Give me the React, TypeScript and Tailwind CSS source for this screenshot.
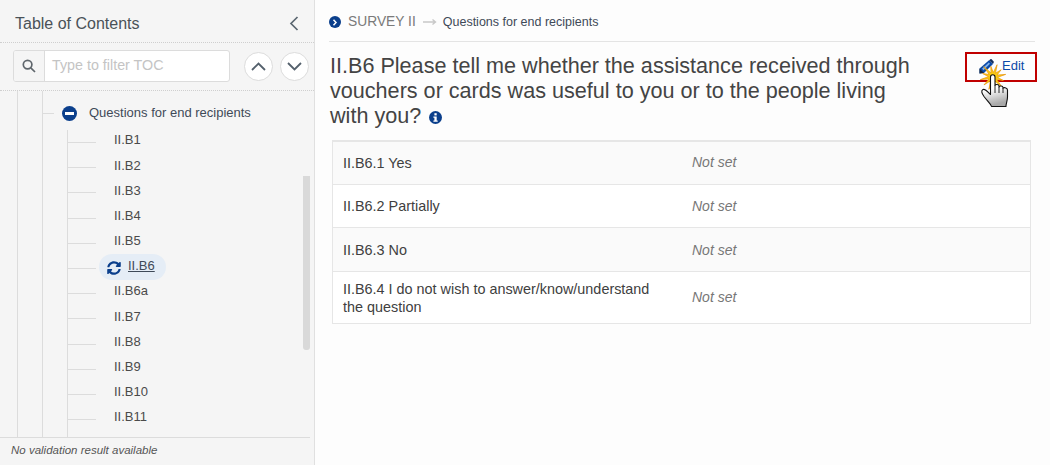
const font = "font-['Liberation_Sans',Arial,sans-serif]";

const treeItems = ["II.B1", "II.B2", "II.B3", "II.B4", "II.B5", "II.B6", "II.B6a", "II.B7", "II.B8", "II.B9", "II.B10", "II.B11"];

const answers = [
  { label: "II.B6.1 Yes", rowClass: "h-[43px] bg-[#fafafa] pb-[1px]" },
  { label: "II.B6.2 Partially", rowClass: "h-[43px] bg-white" },
  { label: "II.B6.3 No", rowClass: "h-[44px] bg-[#fafafa] pt-[1px]" },
  { label: "II.B6.4 I do not wish to answer/know/understand the question", rowClass: "h-[51px] bg-white" },
];

const starRadii = [13, 4.5, 11, 4.5, 14, 4.5, 11, 4.5, 13, 4.5, 12, 4.5, 13, 4.5, 11, 4.5, 14, 4.5, 11, 4.5, 13, 4.5, 11, 4.5];
const starPoints = starRadii
  .map((r, i) => {
    const a = (i / starRadii.length) * Math.PI * 2 - 0.2;
    return `${(13 + r * Math.cos(a)).toFixed(1)},${(13 + r * Math.sin(a)).toFixed(1)}`;
  })
  .join(" ");

function SyncIcon() {
  return (
    <svg width="14" height="14" viewBox="0 0 512 512" fill="#0b3f8c" className="mt-[2px] -ml-[1px]">
      <path d="M370.72 133.28C339.458 104.008 298.888 87.962 255.848 88c-77.458.068-144.328 53.178-162.791 126.85-1.344 5.363-6.122 9.15-11.651 9.15H24.103c-7.498 0-13.194-6.807-11.807-14.176C33.933 94.924 134.813 8 256 8c66.448 0 126.791 26.136 171.315 68.685L463.03 40.97C478.149 25.851 504 36.559 504 57.941V192c0 13.255-10.745 24-24 24H345.941c-21.382 0-32.09-25.851-16.971-40.971l41.75-41.749zM32 296h134.059c21.382 0 32.09 25.851 16.971 40.971l-41.75 41.75c31.262 29.273 71.835 45.319 114.876 45.28 77.418-.07 144.315-53.144 162.787-126.849 1.344-5.363 6.122-9.15 11.651-9.15h57.304c7.498 0 13.194 6.807 11.807 14.176C478.067 417.076 377.187 504 256 504c-66.448 0-126.791-26.136-171.315-68.685L48.97 471.03C33.851 486.149 8 475.441 8 454.059V320c0-13.255 10.745-24 24-24z" />
    </svg>
  );
}

function ChevronButton({ up }: { up?: boolean }) {
  return (
    <button className="flex h-[29px] w-[29px] items-center justify-center rounded-full border border-[#dcdcdc] bg-white">
      <svg width="15" height="9" viewBox="0 0 15 9" fill="none" stroke="#54606c" strokeWidth="1.8">
        <path d={up ? "M1 8L7.5 1.5L14 8" : "M1 1L7.5 7.5L14 1"} />
      </svg>
    </button>
  );
}

function EditCursor() {
  return (
    <svg className="absolute left-[13px] top-[10px]" width="30" height="44" viewBox="0 0 30 44">
      <defs>
        <linearGradient id="hand" x1="0" y1="0" x2="0.2" y2="1">
          <stop offset="0.5" stopColor="#ffffff" />
          <stop offset="1" stopColor="#a8a8a8" />
        </linearGradient>
      </defs>
      <polygon points={starPoints} fill="#fbcb12" stroke="#e8930a" strokeWidth="0.7" />
      <path
        d="M10.5 13C10.5 10 15 10 15 13V21.5C15 20 19 20 19 22V23C19 21.5 23 21.5 23 23.5V24.5C23 23 27.5 23.5 27.5 26V33C27.5 37 26 39 26 42.5H11.5C11 40 7 36.5 4 32.5C1.5 29 1 26.5 3 25.5C5 24.5 8 28 10.5 30.5Z"
        fill="url(#hand)"
        stroke="#111111"
        strokeWidth="1.1"
        strokeLinejoin="round"
      />
      <path d="M15 21.5V29M19 23V29M23 24.5V29" stroke="#111111" strokeWidth="0.9" />
    </svg>
  );
}

function PencilIcon() {
  return (
    <svg width="15" height="15" viewBox="0 0 15 15">
      <path d="M0.5 9.5L10 1.2L14 5L5 14L0.5 14.5Z" fill="#0b4aa8" />
      <path d="M10 1.2L11.2 0.4C11.7 0 12.3 0 12.8 0.5L14.5 2.2C15 2.7 15 3.3 14.6 3.8L14 5Z" fill="#16305f" />
      <path d="M3 9.7L9.8 3.5L11 4.7L4.5 11.2Z" fill="#7fb0ea" />
      <path d="M0.5 9.5L5 14L0.5 14.5Z" fill="#16243c" />
    </svg>
  );
}

export default function App() {
  return (
    <div className={`${font} flex h-[465px] w-[1050px] overflow-hidden bg-[#fdfdfd] text-[14px] text-[#404040]`}>
      <aside className="flex w-[315px] shrink-0 flex-col border-r border-[#e0e0e0] bg-[#f5f5f5]">
        <div className="flex h-[43px] shrink-0 items-center justify-between border-b border-dotted border-[#cfcfcf] pl-[15px] pr-[15px] pt-[5px]">
          <span className="text-[16px] text-[#4a5258]">Table of Contents</span>
          <svg width="10" height="15" viewBox="0 0 10 15" fill="none" stroke="#5a6670" strokeWidth="1.7">
            <path d="M8.5 1L2 7.5L8.5 14" />
          </svg>
        </div>

        <div className="flex h-[48px] shrink-0 items-center gap-[14px] border-b border-dotted border-[#cfcfcf] pl-[13px]">
          <div className="-mt-[1px] flex h-[32px] w-[217px] overflow-hidden rounded-[3px] border border-[#dcdcdc] bg-white">
            <div className="flex w-[31px] shrink-0 items-center justify-center border-r border-[#dcdcdc] bg-[#f5f5f5]">
              <svg width="14" height="14" viewBox="0 0 14 14" fill="none" stroke="#5f666c" strokeWidth="1.7">
                <circle cx="5.6" cy="5.6" r="4.3" />
                <path d="M8.8 8.8L13 13" />
              </svg>
            </div>
            <span className="flex items-center pl-[7px] text-[14.3px] text-[#c4c4c4]">Type to filter TOC</span>
          </div>
          <div className="flex gap-[7px]">
            <ChevronButton up />
            <ChevronButton />
          </div>
        </div>

        <div className="relative min-h-0 flex-1 overflow-hidden text-[13px]">
          <div className="ml-[17px] h-full border-l border-[#dcdcdc]">
            <div className="ml-[24px] h-full border-l border-[#dcdcdc]">
              <div className="flex h-[39px] items-center pt-[5px]">
                <span className="w-[11px] border-t border-[#dcdcdc]" />
                <span className="ml-[8px] flex h-[15px] w-[15px] items-center justify-center rounded-full bg-[#0b3f8c]">
                  <span className="h-[3px] w-[9px] bg-white" />
                </span>
                <span className="ml-[12px] text-[#3f4a58]">Questions for end recipients</span>
              </div>
              <div className="ml-[24px] h-full border-l border-[#dcdcdc]">
                {treeItems.map((item) => (
                  <div key={item} className="flex h-[25.2px] items-center">
                    <span className="w-[28px] shrink-0 border-t border-[#dcdcdc]" />
                    {item === "II.B6" ? (
                      <span className="-mt-[4px] ml-[3px] flex h-[26px] w-[67px] items-center gap-[7px] rounded-full bg-[#e5edf6] pl-[9px]">
                        <SyncIcon />
                        <span className="-mt-[1px] text-[#3f4a58] underline">{item}</span>
                      </span>
                    ) : (
                      <span className="-mt-[5px] ml-[18px] text-[#4a4a4a]">{item}</span>
                    )}
                  </div>
                ))}
              </div>
            </div>
          </div>
          <div className="absolute right-[4px] top-[85px] h-[174px] w-[7px] rounded-b-[3px] bg-[#d9d9d9]" />
        </div>

        <div className="mr-[4px] flex h-[28px] shrink-0 items-center border-t border-[#dcdcdc] pb-[2px] pl-[11px] text-[11.5px] italic text-[#555555]">
          No validation result available
        </div>
      </aside>

      <main className="flex min-w-0 flex-1 flex-col pl-[14px] pr-[15px]">
        <div className="flex h-[42px] shrink-0 items-center border-b border-[#e4e4e4] pt-[3px]">
          <span className="flex h-[12px] w-[12px] items-center justify-center rounded-full bg-[#0b3f8c]">
            <svg width="6" height="7" viewBox="0 0 6 7" fill="none" stroke="#ffffff" strokeWidth="1.5">
              <path d="M1.5 0.8L4 3.5L1.5 6.2" />
            </svg>
          </span>
          <span className="ml-[7px] text-[13.8px] text-[#7a7a7a]">SURVEY II</span>
          <svg width="14" height="8" viewBox="0 0 14 8" fill="none" stroke="#c8c8c8" strokeWidth="1.4" className="ml-[7px]">
            <path d="M0 4H12M9.5 1.5L12.5 4L9.5 6.5" />
          </svg>
          <span className="ml-[6px] text-[12.5px] text-[#3f4a58]">Questions for end recipients</span>
        </div>

        <div className="flex h-[98px] shrink-0 items-start justify-between pt-[10px]">
          <h1 className="mt-[1px] w-[590px] pl-[1px] text-[21.6px] leading-[25px] font-normal text-[#444444]">
            II.B6 Please tell me whether the assistance received through vouchers or cards was useful to you or to the people living with you?{" "}
            <svg width="13" height="13" viewBox="0 0 13 13" className="ml-[2px] inline-block align-[-1px]">
              <circle cx="6.5" cy="6.5" r="6.5" fill="#0b3f8c" />
              <rect x="5.4" y="2.2" width="2.3" height="2.2" fill="#ffffff" />
              <path d="M4.4 5.4H7.7V9.4H8.7V10.8H4.4V9.4H5.4V6.8H4.4Z" fill="#ffffff" />
            </svg>
          </h1>
          <div className="relative -mr-[2px] flex h-[30px] w-[72px] items-center border-2 border-[#c00000] pb-[2px] pl-[12px]">
            <PencilIcon />
            <span className="ml-[8px] text-[13px] text-[#0b4aa8]">Edit</span>
            <EditCursor />
          </div>
        </div>

        <div className="ml-[3px] mr-[4px] border-x border-b border-t-2 border-[#e6e6e6]">
          {answers.map((answer) => (
            <div key={answer.label} className={`flex items-center border-b border-[#e6e6e6] last:border-b-0 ${answer.rowClass}`}>
              <div className="w-[359px] shrink-0 pl-[10px] pr-[30px] text-[14.4px] leading-[18px]">{answer.label}</div>
              <div className="italic text-[#777777]">Not set</div>
            </div>
          ))}
        </div>
      </main>
    </div>
  );
}
